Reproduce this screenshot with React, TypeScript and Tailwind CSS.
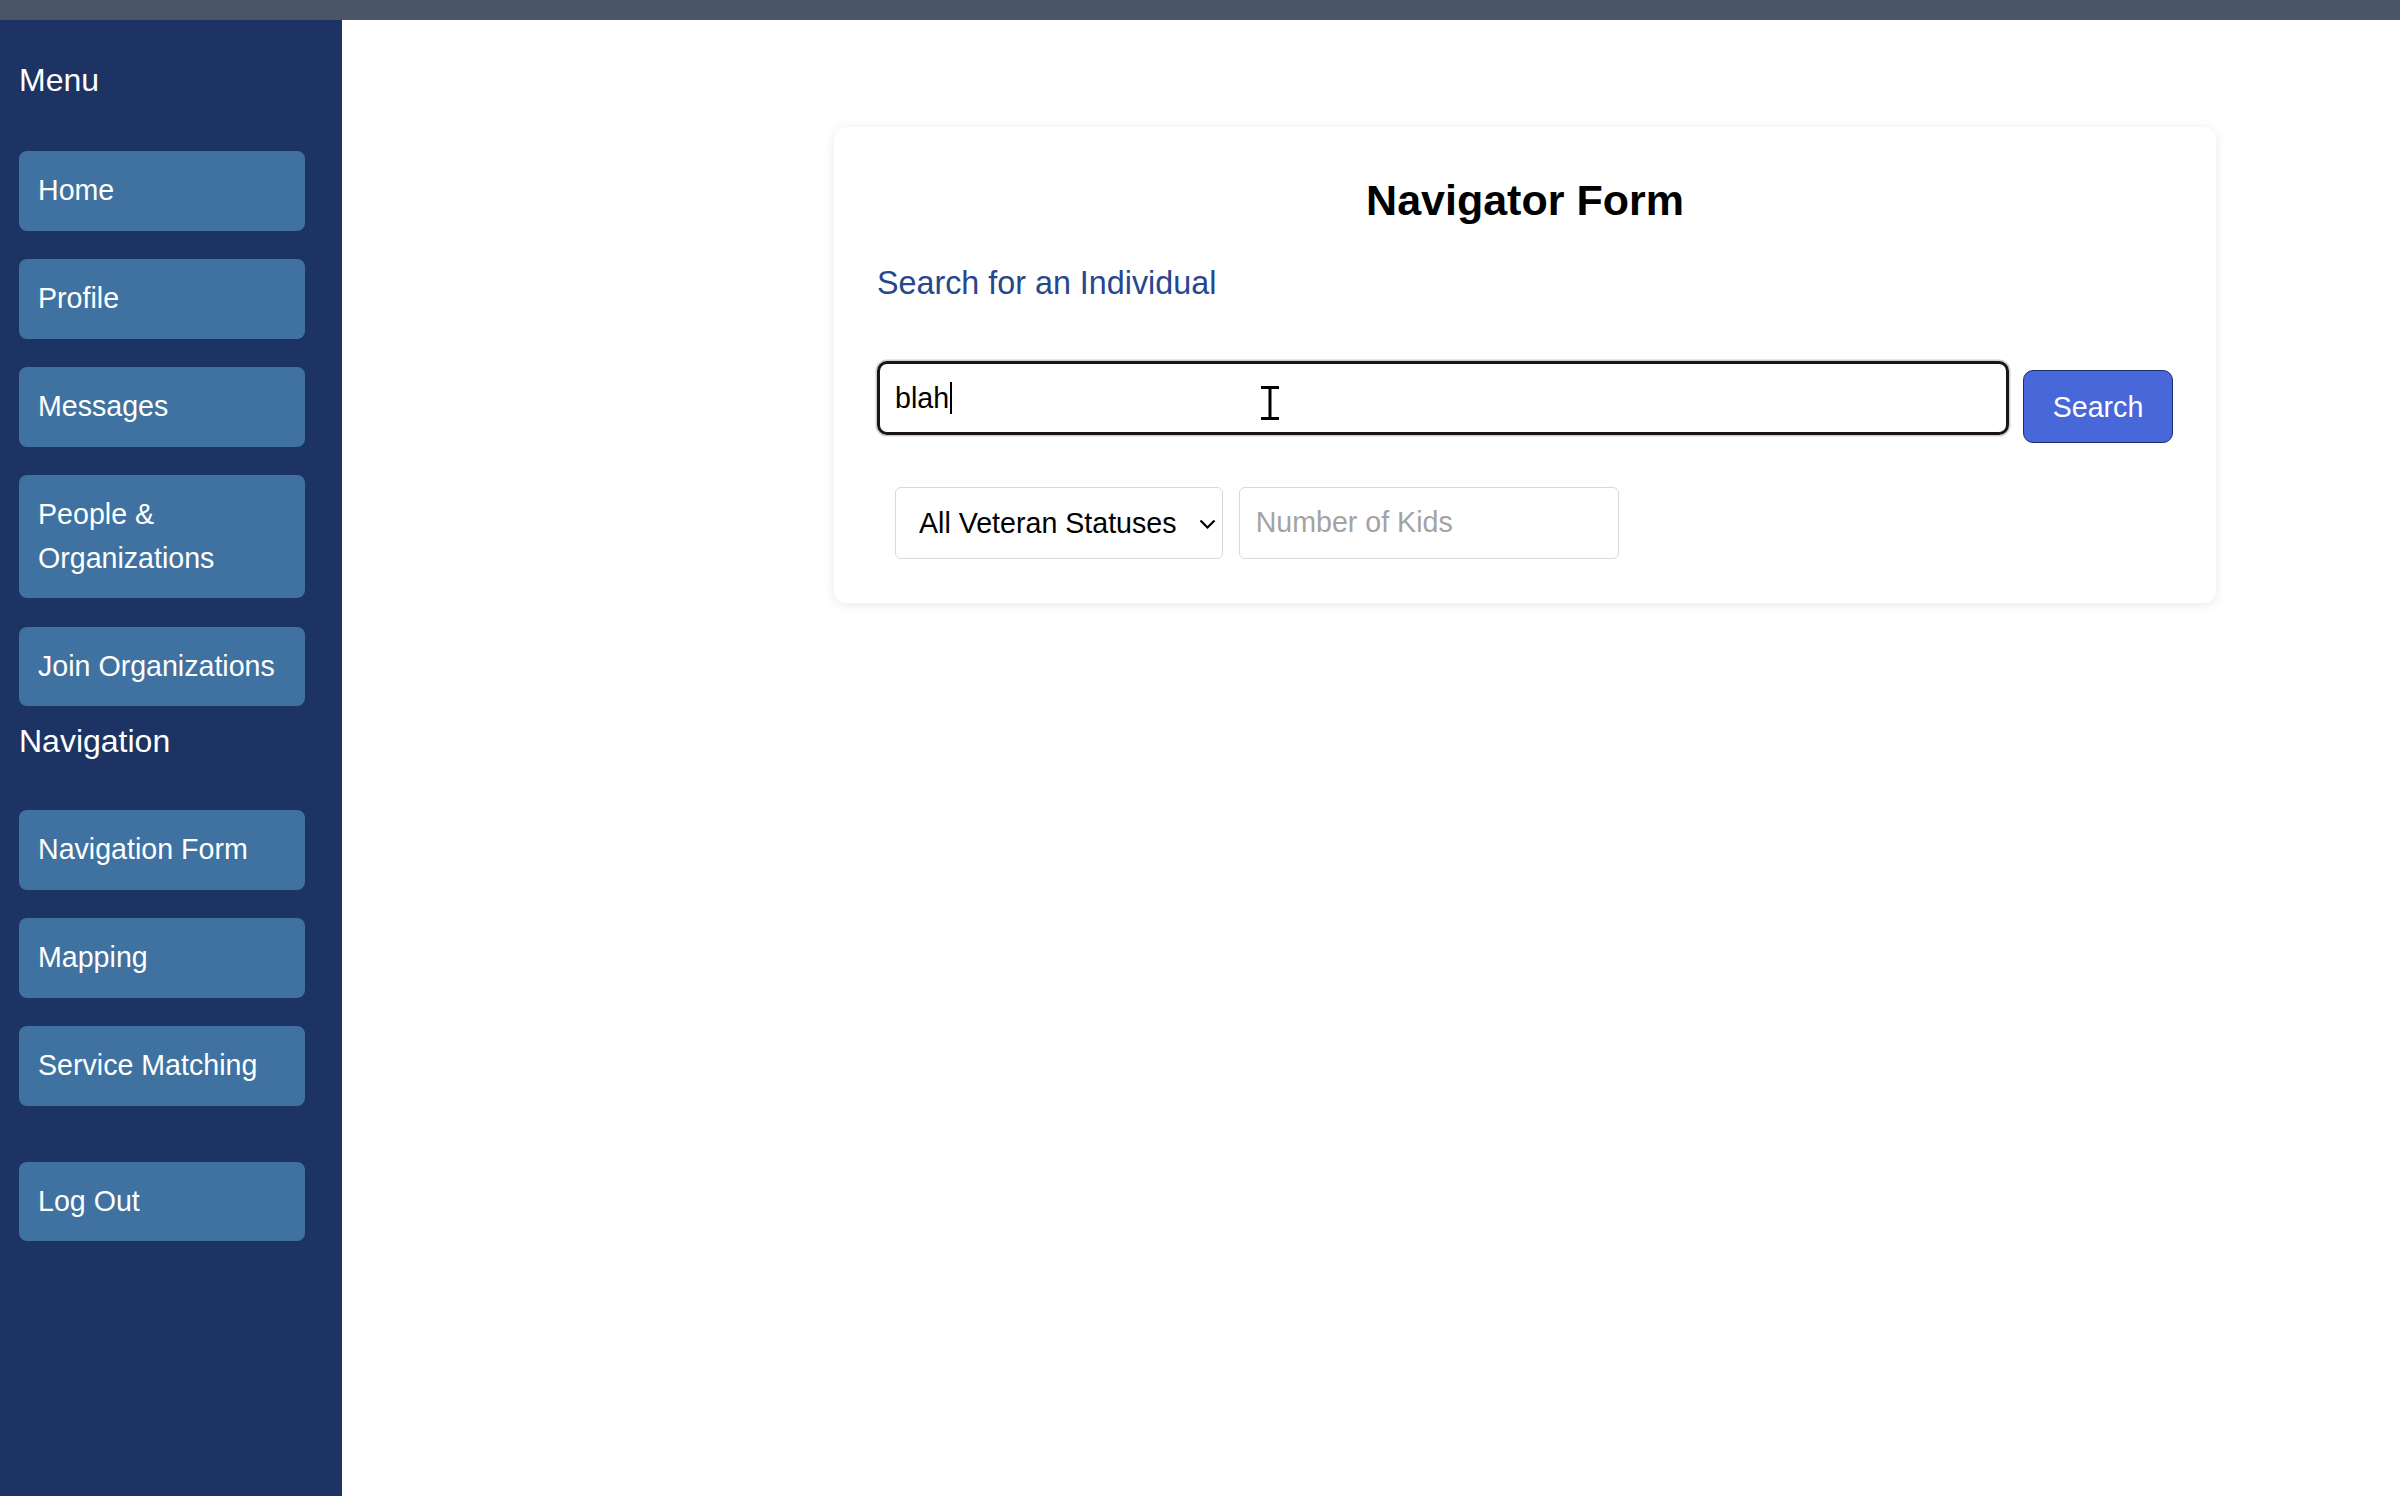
import React from "react";

const menuItems: string[] = ["Home", "Profile", "Messages", "People & Organizations", "Join Organizations"];
const navItems: string[] = ["Navigation Form", "Mapping", "Service Matching"];

function NavButton({ label, className = "" }: { label: string; className?: string }) {
  return (
    <button
      type="button"
      className={
        "block w-[286px] text-left px-[19px] py-[18px] rounded-[8px] bg-[#3f72a0] text-white text-[28.6px] leading-[43.5px] " +
        className
      }
    >
      {label === "People & Organizations" ? (
        <>
          People &amp;
          <br />
          Organizations
        </>
      ) : (
        label
      )}
    </button>
  );
}

export default function App() {
  return (
    <div
      className="h-screen flex flex-col bg-white overflow-hidden"
      style={{ fontFamily: '"Liberation Sans", Arial, sans-serif' }}
    >
      <div className="h-[20px] shrink-0 bg-[#4a5568]" />
      <div className="flex flex-1 min-h-0">
        <aside className="w-[342px] shrink-0 bg-[#1c3363] pl-[19px] pt-[40px] flex flex-col">
          <div className="h-[40px] leading-[40px] text-[32px] text-white">Menu</div>
          <div className="mt-[51px] flex flex-col gap-[28.5px]">
            {menuItems.map((m) => (
              <NavButton key={m} label={m} />
            ))}
          </div>
          <div className="mt-[15px] h-[40px] leading-[40px] text-[32px] text-white">Navigation</div>
          <div className="mt-[49px] flex flex-col gap-[28.5px]">
            {navItems.map((m) => (
              <NavButton key={m} label={m} />
            ))}
          </div>
          <NavButton label="Log Out" className="mt-[56px]" />
        </aside>

        <main className="flex-1 pl-[492px] pt-[107px]">
          <div className="w-[1382px] bg-white rounded-[12px] shadow-[0_2px_12px_rgba(0,0,0,0.09)] pt-[47.5px] px-[43px] pb-[44px]">
            <h2 className="h-[50px] leading-[50px] text-[43px] font-bold text-center text-black">Navigator Form</h2>
            <h3 className="mt-[38.8px] h-[40px] leading-[40px] text-[32.3px] text-[#27478c]">
              Search for an Individual
            </h3>

            <div className="mt-[58.2px] flex items-start gap-[14px]">
              <div className="relative flex-1 h-[74px] border-[3px] border-[#1a1414] rounded-[10px] ring-[1.5px] ring-[#cfcfcf] pl-[15px] flex items-center text-[28.6px] text-black">
                <span>blah</span>
                <span className="ml-[1px] w-[2px] h-[32px] bg-black" />
                <svg
                  className="absolute left-[380px] top-[22px]"
                  width="20"
                  height="34"
                  viewBox="0 0 20 34"
                >
                  <path d="M1 1.5H19M1 32.5H19M10 1.5V32.5" stroke="#fff" strokeWidth="5" fill="none" />
                  <path d="M1 1.5H19M1 32.5H19M10 1.5V32.5" stroke="#000" strokeWidth="3" fill="none" />
                </svg>
              </div>
              <button
                type="button"
                className="mt-[9px] w-[150px] h-[73px] shrink-0 bg-[#4867d9] border border-[#1e2d6b] rounded-[10px] text-white text-[28.6px]"
              >
                Search
              </button>
            </div>

            <div className="mt-[43.5px] pl-[18px] flex gap-[16px]">
              <div className="relative w-[328px] h-[72px]">
                <select
                  className="appearance-none w-full h-full border border-[#d9d9d9] rounded-[6px] bg-white pl-[23px] text-[28.6px] text-black outline-none"
                  style={{ fontFamily: '"Liberation Sans", Arial, sans-serif' }}
                  defaultValue="all"
                >
                  <option value="all">All Veteran Statuses</option>
                  <option value="vet">Veteran</option>
                  <option value="non">Non-Veteran</option>
                </select>
                <svg
                  className="absolute right-[7px] top-[32px] pointer-events-none"
                  width="17"
                  height="10"
                  viewBox="0 0 17 10"
                >
                  <path d="M1.5 1.5L8.5 8.5L15.5 1.5" stroke="#000" strokeWidth="2.2" fill="none" />
                </svg>
              </div>
              <input
                type="text"
                placeholder="Number of Kids"
                className="w-[380px] h-[72px] border border-[#d9d9d9] rounded-[6px] pl-[15.7px] text-[28.6px] text-black placeholder:text-[#a3a3a3] outline-none"
                style={{ fontFamily: '"Liberation Sans", Arial, sans-serif' }}
              />
            </div>
          </div>
        </main>
      </div>
    </div>
  );
}
